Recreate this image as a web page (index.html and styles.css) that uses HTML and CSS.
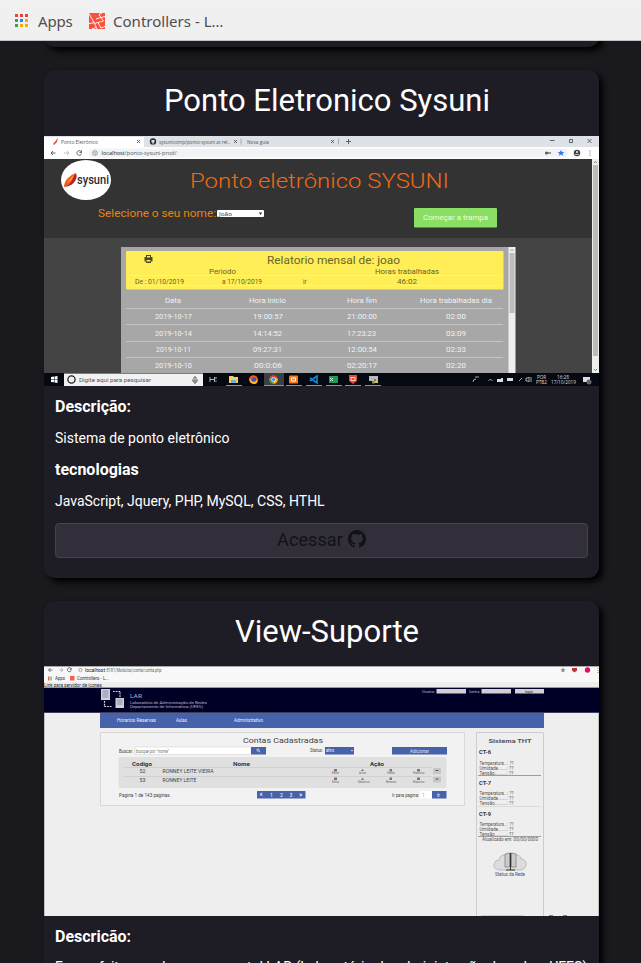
FILE: index.html
```html
<!DOCTYPE html>
<html lang="pt-BR">
<head>
<meta charset="utf-8">
<title>Portfólio</title>
<link rel="stylesheet" href="styles.css">
</head>
<body>
<header class="bookmarks">
  <svg class="apps" width="14" height="14" viewBox="0 0 14 14"><path fill="#ea4335" d="M0 0h3v3H0zM5 0h3v3H5zM10 0h3v3h-3z"/><path fill="#34a05a" d="M0 5h3v3H0zM0 10h3v3H0z"/><path fill="#1a8cf0" d="M5 5h3v3H5z"/><path fill="#f9ab00" d="M10 5h3v3h-3zM5 10h3v3H5zM10 10h3v3h-3z"/></svg>
  <span class="apps-label">Apps</span>
  <svg class="laravel" width="16" height="16" viewBox="0 0 16 16"><path fill="#fb503b" d="M0 0h16v16H0z"/><path d="M0 .5l5.500 10L14.500 8l-2.500-3.500 4-1M0 10.500l5.500-.8M5.500 10.500L8 16M9 9.500l3 5.500 4-1.500M7 6l5-1.500L10 1.500l3-1.500M3 16l4-1.500" fill="none" stroke="#fff" stroke-width=".9"/></svg>
  <span class="site-label">Controllers - L…</span>
</header>
<main class="projects">
  <article class="card card-end"></article>
  <article class="card">
    <h2 class="title">Ponto Eletronico Sysuni</h2>
    <svg class="shot" viewBox="44 136 555 250">
      <path fill="#333" d="M44 136h555v250H44z"/>
      <path fill="#dee1e6" d="M44 136h555v11H44z"/><path fill="#fff" d="M44 137h100v10H44zM44 147h555v12H44z"/>
      <rect x="89" y="148.500" width="479" height="9" rx="4.500" fill="#f1f3f4"/>
      <path fill="#e8502a" d="M53 144l5-6-1 4-3 3z"/>
      <g class="t" fill="#55585c" font-size="5.500">
        <text x="61" y="143.500" textLength="37" lengthAdjust="spacingAndGlyphs">Ponto Eletrônico</text>
        <text x="159" y="143.500" textLength="71" lengthAdjust="spacingAndGlyphs">sysunicomp/ponto-sysuni at rel..</text>
        <text x="247" y="143.500" textLength="22" lengthAdjust="spacingAndGlyphs">Nova guia</text>
        <text x="101.500" y="155" textLength="75" lengthAdjust="spacingAndGlyphs"><tspan fill="#222">localhost</tspan>/ponto-sysuni-prod/</text>
      </g>
      <circle cx="153" cy="141.500" r="3.200" fill="#24292e"/><path fill="#dee1e6" d="M151.500 140h3v2.500h-1v2h-1v-2h-1z"/>
      <path d="M137 140l3 3m0-3l-3 3M234 140l3 3m0-3l-3 3M331 140l3 3m0-3l-3 3M346 141.500h5m-2.500-2.500v5M550 140.500h4.500M569.500 139.500h3v3h-3zM587.500 139l4 4m0-4l-4 4M51 153h4.500m-2.500-2l-2 2 2 2" fill="none" stroke="#505358" stroke-width=".9"/>
      <path d="M241 138.500v6M338.500 138.500v6" stroke="#8f9296" stroke-width=".7"/>
      <path d="M64 153h5m-2-2l2 2-2 2" fill="none" stroke="#b5b7ba" stroke-width=".9"/>
      <path d="M81 151.500a2.300 2.300 0 1 0 .5 2M81.500 150.500v2h-2" fill="none" stroke="#505358" stroke-width=".9"/>
      <circle cx="95" cy="153" r="2.300" fill="none" stroke="#707377" stroke-width=".7"/><path d="M95 151.800v2.400" stroke="#707377" stroke-width=".7"/>
      <path d="M546 153h5" stroke="#55585c" stroke-width="1.200"/><circle cx="546.500" cy="153" r="1.500" fill="#55585c"/><path fill="#3478ed" d="M561 150l1 2h2.500l-2 1.500.8 2.300-2.300-1.300-2.300 1.300.8-2.300-2-1.500h2.500z"/>
      <circle cx="577" cy="153" r="3.200" fill="#444"/><circle cx="577" cy="152" r="1" fill="#eee"/><path d="M575 154.500h4" stroke="#ddd" stroke-width=".8"/><path d="M590 150.500v1M590 152.700v1M590 154.900v1" stroke="#666"/>
      <ellipse cx="86" cy="180" rx="25" ry="20" fill="#fff"/><path fill="#f05a22" d="M64 187q0-5 4-9 4-4 8-5-1 5-4 8-2 4-8 6"/><path fill="#b41f25" d="M64.500 187q7-3 9-10l2.500-4q2 5-2.500 10-3 3-9 4z"/><path fill="#f9a51a" d="M67 183q3-5 7-8-1 5-7 8"/>
      <text class="w" x="77" y="184" textLength="32" lengthAdjust="spacingAndGlyphs" font-size="12" font-weight="500" fill="#2b2b2b">sysuni</text>
      <text class="w" x="190" y="188" textLength="259" lengthAdjust="spacingAndGlyphs" font-size="19.500" font-weight="300" fill="#f06a15">Ponto eletrônico SYSUNI</text>
      <text class="w" x="98" y="217" textLength="118" lengthAdjust="spacingAndGlyphs" font-size="10" fill="#e58610">Selecione o seu nome:</text>
      <rect x="217" y="210" width="47" height="7" rx="1" fill="#fff"/><text class="t" x="219" y="216" textLength="13" lengthAdjust="spacingAndGlyphs" font-size="5.500" fill="#333">João</text><path fill="#222" d="M259 212.500h3l-1.500 2.500z"/>
      <rect x="414" y="208" width="83" height="19.500" rx="1" fill="#8ade63"/><text class="w" x="423" y="220" textLength="65" lengthAdjust="spacingAndGlyphs" font-size="6.500" fill="#eaffdf">Começar a trampa</text>
      <path fill="#444" d="M44 238h548v135H44z"/>
      <path fill="#eee" d="M592 159h7v214h-7z"/><path fill="#bbb" d="M593 165h5v191h-5z"/><path d="M594 163l1.500-1.500 1.500 1.500M594 369l1.500 1.500 1.500-1.500" fill="none" stroke="#666" stroke-width=".8"/>
      <path fill="#a7a7a7" d="M121 247h388v126H121z"/><path fill="#eee" d="M508.500 247h7v126h-7z"/><path fill="#bdbdbd" d="M509.500 253h5v60h-5z"/><path d="M510.500 251l1.500-1.500 1.500 1.500" fill="none" stroke="#777" stroke-width=".7"/>
      <rect x="126" y="251" width="377.500" height="38.500" rx="1" fill="#ffee55"/><path d="M130 275.500h370M130 285.500h370" stroke="#fff38c" stroke-width=".8"/>
      <path fill="#4b4828" d="M146 255h5v2h1.500v4.500h-1.500v1.500h-5v-1.500h-1.500V257h1.500z"/><path fill="#ffee55" d="M147 256h3v1.500h-3zM146.500 260h4v1.500h-4z"/>
      <g class="w" fill="#69642c">
        <text x="267" y="264" textLength="133" lengthAdjust="spacingAndGlyphs" font-size="10.300">Relatorio mensal de: joao</text>
        <g font-size="6.500"><text x="209" y="273.500" textLength="27" lengthAdjust="spacingAndGlyphs">Periodo</text><text x="375" y="273.500" textLength="64" lengthAdjust="spacingAndGlyphs">Horas trabalhadas</text><text x="135" y="283.500" textLength="49" lengthAdjust="spacingAndGlyphs">De : 01/10/2019</text><text x="222" y="283.500" textLength="40" lengthAdjust="spacingAndGlyphs">a 17/10/2019</text><text x="303" y="283.500">ir</text><text x="397" y="283.500" textLength="20" lengthAdjust="spacingAndGlyphs">46:02</text></g>
      </g>
      <path d="M126 308.500h377M126 324.500h377M126 341.500h377M126 357.500h377" stroke="#c4c4c4"/>
      <g class="w" fill="#f2f2f2" font-size="6.800">
        <text x="165" y="303" textLength="16" lengthAdjust="spacingAndGlyphs">Data</text><text x="249" y="303" textLength="37" lengthAdjust="spacingAndGlyphs">Hora inicio</text><text x="347" y="303" textLength="30" lengthAdjust="spacingAndGlyphs">Hora fim</text><text x="420" y="303" textLength="72" lengthAdjust="spacingAndGlyphs">Hora trabalhadas dia</text>
        <text x="155" y="319" textLength="37" lengthAdjust="spacingAndGlyphs">2019-10-17</text><text x="253" y="319" textLength="30" lengthAdjust="spacingAndGlyphs">19:00:57</text><text x="347" y="319" textLength="30" lengthAdjust="spacingAndGlyphs">21:00:00</text><text x="446" y="319" textLength="20" lengthAdjust="spacingAndGlyphs">02:00</text>
        <text x="155" y="335.500" textLength="37" lengthAdjust="spacingAndGlyphs">2019-10-14</text><text x="253" y="335.500" textLength="29" lengthAdjust="spacingAndGlyphs">14:14:52</text><text x="347" y="335.500" textLength="29" lengthAdjust="spacingAndGlyphs">17:23:23</text><text x="446" y="335.500" textLength="20" lengthAdjust="spacingAndGlyphs">03:09</text>
        <text x="156" y="351.500" textLength="35" lengthAdjust="spacingAndGlyphs">2019-10-11</text><text x="253" y="351.500" textLength="29" lengthAdjust="spacingAndGlyphs">09:27:31</text><text x="347" y="351.500" textLength="30" lengthAdjust="spacingAndGlyphs">12:00:54</text><text x="446" y="351.500" textLength="20" lengthAdjust="spacingAndGlyphs">02:33</text>
        <text x="155" y="368" textLength="37" lengthAdjust="spacingAndGlyphs">2019-10-10</text><text x="254" y="368" textLength="28" lengthAdjust="spacingAndGlyphs">00:0:06</text><text x="347" y="368" textLength="30" lengthAdjust="spacingAndGlyphs">02:20:17</text><text x="446" y="368" textLength="20" lengthAdjust="spacingAndGlyphs">02:20</text>
      </g>
      <path fill="#050912" d="M44 373h555v13H44z"/><path fill="#f1f1f1" d="M64 373.500h139V386H64z"/><path fill="#fff" d="M51 377l3-.4v2.600h-3zM54.500 376.500l3-.5v3.200h-3zM51 379.700h3v2.600l-3-.4zM54.500 379.700h3v3.200l-3-.5z"/>
      <circle cx="71.500" cy="379.500" r="3.600" fill="none" stroke="#222" stroke-width="1.300"/><text class="w" x="79" y="382" textLength="72" lengthAdjust="spacingAndGlyphs" font-size="6" fill="#555">Digite aqui para pesquisar</text>
      <path d="M194 377h2v4h-2zM192.500 379.500q0 3 2.500 3t2.500-3M195 382.500v1.500" fill="none" stroke="#444" stroke-width=".8"/><path d="M210 377v5M214.500 377v5M210 379.500h4.500M216 377v2M216 380.500v1.500" fill="none" stroke="#ddd" stroke-width=".8"/>
      <path fill="#3b4045" d="M264 373h20v12h-20z"/><path d="M226 385.500h16M264 385.500h20M286 385.500h16M306 385.500h16M326 385.500h16M345 385.500h16M365 385.500h16" stroke="#b576cd"/>
      <path fill="#f3cf64" d="M229 376h4l1 1h4v6h-9z"/><path fill="#5fb5e7" d="M231 380h5v3h-5z"/>
      <circle cx="253.500" cy="379.500" r="4.300" fill="#f35b22"/><circle cx="254" cy="379.500" r="2.200" fill="#4f4bb5"/><path fill="#ffc629" d="M250 377q0 5 4 5 4-1 3-5 2 7-3 7-6-1-4-7"/>
      <circle cx="273.500" cy="379.500" r="4.300" fill="#ea4335"/><path fill="#34a853" d="M269.700 377.500l3.800 6.300a4.300 4.300 0 0 1-3.800-6.300"/><path fill="#fbbc05" d="M273.500 379.500l4-1.500q1 5-4 6z"/><circle cx="273.500" cy="379.500" r="2" fill="#4285f4" stroke="#fff" stroke-width=".7"/>
      <rect x="289" y="375.500" width="9" height="8" rx="1" fill="#f47a20"/><path d="M291.500 378h4v3h-4z" fill="none" stroke="#fff"/><path d="M310 378l7 5v-7l-7 5" fill="none" stroke="#1688d5" stroke-width="1.600"/>
      <path fill="#1a9b58" d="M329 376h9v7h-9z"/><path d="M330 378l3 3m0-3l-3 3" stroke="#fff" stroke-width=".8"/><path fill="#e74732" d="M349 375h8v6l-4 3-4-3z"/><path d="M351 377.500h4v3h-4z" fill="none" stroke="#ffd8cc"/>
      <path fill="#b9b9b9" d="M369 376h9v5h-9z"/><path fill="#e94a38" d="M374 379h2v2h-2z"/><path fill="#4fb75b" d="M372 381h3v2.500h-3z"/><path fill="#f0c23b" d="M375 381h3v2h-3z"/>
      <path d="M473 382q0-3 3-3m-1-2h4M488.500 381l2-2 2 2M519 381l3-3M526 378v3h2l1 1v-5l-1 1zM531 377v5" fill="none" stroke="#ccc" stroke-width=".8"/><path fill="#ddd" d="M497 379h4v-1h2v4h-6zM507 378h6v3h-6zM583 377h7v5h-7z"/><circle cx="589" cy="382" r="2.500" fill="#666"/>
      <g class="t" fill="#ddd" font-size="5"><text x="537" y="378.500" textLength="9" lengthAdjust="spacingAndGlyphs">POR</text><text x="536" y="384" textLength="11" lengthAdjust="spacingAndGlyphs">PTB2</text><text x="557" y="378.500" textLength="12" lengthAdjust="spacingAndGlyphs">16:28</text><text x="551" y="384" textLength="25" lengthAdjust="spacingAndGlyphs">17/10/2019</text></g>
    </svg>
    <div class="details">
      <h3>Descrição:</h3>
      <p>Sistema de ponto eletrônico</p>
      <h3>tecnologias</h3>
      <p>JavaScript, Jquery, PHP, MySQL, CSS, HTHL</p>
      <a class="button">Acessar <svg class="github" viewBox="0 0 16 16"><path d="M8 0C3.580 0 0 3.580 0 8c0 3.540 2.290 6.530 5.470 7.590.4.070.55-.17.55-.38 0-.19-.01-.82-.01-1.490-2.010.37-2.530-.49-2.690-.94-.09-.23-.48-.94-.82-1.130-.28-.15-.68-.52-.01-.53.63-.01 1.080.58 1.230.82.72 1.210 1.870.87 2.330.66.07-.52.28-.87.51-1.070-1.780-.2-3.640-.89-3.640-3.950 0-.87.31-1.590.82-2.150-.08-.2-.36-1.020.08-2.120 0 0 .67-.21 2.200.82.64-.18 1.320-.27 2-.27s1.360.09 2 .27c1.530-1.040 2.200-.82 2.200-.82.44 1.100.16 1.920.08 2.120.51.56.82 1.270.82 2.150 0 3.070-1.870 3.750-3.650 3.950.29.25.54.73.54 1.480 0 1.070-.01 1.930-.01 2.200 0 .21.15.46.55.38A8.010 8.010 0 0 0 16 8c0-4.420-3.580-8-8-8z"/></svg></a>
    </div>
  </article>
  <article class="card">
    <h2 class="title">View-Suporte</h2>
    <svg class="shot" viewBox="44 666 555 250">
      <path fill="#eee" d="M44 666h555v250H44z"/><path fill="#f8f8f8" d="M44 666h555v16H44z"/>
      <path d="M44 666.500h555" stroke="#aaa"/>
      <g class="w" fill="#666" font-size="4.800"><text x="85" y="671.500" textLength="20" lengthAdjust="spacingAndGlyphs" fill="#111">localhost</text><text x="105.500" y="671.500" textLength="56" lengthAdjust="spacingAndGlyphs">:8181/Modulos/conta/conta.php</text><text x="55" y="680" textLength="10" lengthAdjust="spacingAndGlyphs" fill="#333">Apps</text><text x="77" y="680" textLength="32" lengthAdjust="spacingAndGlyphs" fill="#333">Controllers - L...</text><text x="44" y="686.700" textLength="58" lengthAdjust="spacingAndGlyphs" fill="#222" font-size="5">Link para servidor de ícones</text></g>
      <path d="M48.500 670h4m-2-2l-2 2 2 2M71 668.500a2 2 0 1 0 .3 2M71.300 668v1.500h-1.500" fill="none" stroke="#555" stroke-width=".8"/><path d="M59 670h4m-2-2l2 2-2 2" fill="none" stroke="#aaa" stroke-width=".8"/><circle cx="80.500" cy="670" r="1.700" fill="none" stroke="#777" stroke-width=".6"/>
      <path fill="#f06050" d="M48 676.500h1v4h-1zM70 676h4.500v4.500H70z"/><path fill="#45a76b" d="M49.500 676.500h1v4h-1z"/><path fill="#e4ac34" d="M51 676.500h1v4h-1z"/>
      <path fill="#888" d="M563 667.500l.8 1.700 1.700.2-1.300 1.100.4 1.700-1.600-.8-1.600.8.4-1.700-1.300-1.100 1.700-.2z"/><path fill="#b4373d" d="M572 668h5v2.500l-2.500 2-2.500-2z"/><circle cx="587.500" cy="670" r="2.700" fill="#d9145e"/><path d="M598 668v1M598 670v1M598 672v1" stroke="#777"/>
      <path fill="#000026" d="M44 688h555v24.500H44z"/><path d="M44 687.500h555" stroke="#999"/><path d="M44 712.500h555" stroke="#3c3c5c"/>
      <path fill="#cfd0db" d="M101 689h9v11h-9zM115.500 698h8.500v10h-8.500z"/><path d="M102.500 691h6M102.500 693h6M102.500 695h6M102.500 697h6M117 700h5.500M117 702h5.500M117 704h5.500" stroke="#777c91" stroke-width=".8"/><path d="M113 691.500h7v6M104.500 701v5.500h8" fill="none" stroke="#ddd" stroke-width="1.200" stroke-dasharray="1.700 1"/>
      <g class="w" fill="#b7b7cd"><text x="130" y="698" textLength="12" lengthAdjust="spacingAndGlyphs" font-size="6">LAR</text><g font-size="4.300"><text x="130" y="703.500" textLength="77" lengthAdjust="spacingAndGlyphs">Laboratório de Administração de Redes</text><text x="130" y="708" textLength="73" lengthAdjust="spacingAndGlyphs">Departamento de Informática (UFES)</text><text x="422" y="692.500" textLength="13" lengthAdjust="spacingAndGlyphs">Usuário:</text><text x="469" y="692.500" textLength="11" lengthAdjust="spacingAndGlyphs">Senha:</text></g></g>
      <path fill="#d2cfd5" d="M436.500 689H466v4.500h-29.500zM481.500 689H511v4.500h-29.500zM515 689h29v4.500h-29z"/><text class="w" x="525" y="692.500" textLength="8" lengthAdjust="spacingAndGlyphs" font-size="4" fill="#222">login</text>
      <path fill="#4562aa" d="M100 713h444v15H100z"/><g class="w" fill="#edf1ff" font-size="4.800"><text x="117" y="722" textLength="39" lengthAdjust="spacingAndGlyphs">Horarios Reservas</text><text x="176" y="722" textLength="11" lengthAdjust="spacingAndGlyphs">Aulas</text><text x="234" y="722" textLength="29" lengthAdjust="spacingAndGlyphs">Administrativo</text></g>
      <path d="M44.500 713v203M598.500 713v203" stroke="#aaa" stroke-width=".7"/>
      <path fill="#f2f2f2" stroke="#d8d8d8" d="M100.500 732.500h364v73h-364z"/><path fill="none" stroke="#ccc" d="M476.500 916V732.500h67V916"/>
      <text class="w" x="243" y="742.500" textLength="80" lengthAdjust="spacingAndGlyphs" font-size="7.300" fill="#444">Contas Cadastradas</text>
      <path fill="#fff" stroke="#ccc" stroke-width=".5" d="M135 747h116v7.500H135z"/><path fill="#4562aa" d="M251 747h15v7.500h-15zM325 747h29v7.500h-29zM392 747h55v7.500h-55z"/><circle cx="258" cy="750" r="1.200" fill="none" stroke="#fff" stroke-width=".6"/><path d="M259 751l1.300 1.300" stroke="#fff" stroke-width=".6"/>
      <rect x="118.500" y="757" width="328" height="31" rx="2" fill="#e0e0e0"/><path d="M123 767.500h309M123 776.500h309" stroke="#c9c9c9" stroke-width=".7"/>
      <g class="w" fill="#444" font-size="4.600"><text x="119" y="752.500" textLength="14" lengthAdjust="spacingAndGlyphs">Buscar:</text><text x="136" y="752.500" textLength="33" lengthAdjust="spacingAndGlyphs" fill="#777">busque por "nome"</text><text x="310" y="752" textLength="13" lengthAdjust="spacingAndGlyphs">Status:</text><text x="326" y="752" textLength="8" lengthAdjust="spacingAndGlyphs" fill="#fff">ativo</text><text x="410" y="752.500" textLength="19" lengthAdjust="spacingAndGlyphs" fill="#e1e7ff">Adicionar</text>
      <g font-weight="700" font-size="5.300" fill="#333"><text x="132" y="766" textLength="20" lengthAdjust="spacingAndGlyphs">Codigo</text><text x="233" y="766" textLength="17" lengthAdjust="spacingAndGlyphs">Nome</text><text x="370" y="766" textLength="14" lengthAdjust="spacingAndGlyphs">Ação</text></g>
      <text x="139.500" y="773" textLength="6" lengthAdjust="spacingAndGlyphs">52</text><text x="162.500" y="773" textLength="51" lengthAdjust="spacingAndGlyphs">RONNEY LEITE VIEIRA</text><text x="139.500" y="781.500" textLength="6" lengthAdjust="spacingAndGlyphs">53</text><text x="162.500" y="781.500" textLength="34" lengthAdjust="spacingAndGlyphs">RONNEY LEITE</text><text x="119" y="796.500" textLength="52" lengthAdjust="spacingAndGlyphs">Pagina 1 de 143 paginas.</text><text x="392" y="796.500" textLength="27" lengthAdjust="spacingAndGlyphs">Ir para pagina:</text></g>
      <path fill="#fff" d="M351 750h2l-1 1.500z"/>
      <g fill="#777"><path d="M334 769h3v2.500h-3zM361 771l1.500-2 1.500 2zM389.500 769h2.500v2.500h-2.500zM417 769h3v2.500h-3zM334 777.500h3v2.500h-3zM361 780l1.500-2.500 1.500 2.500zM389.500 777.500h2.500v2.500h-2.500zM417 777.500h3v2.500h-3z"/></g>
      <g class="w" fill="#735d5d" font-size="2.800"><text x="332" y="774">Editar</text><text x="359" y="774">Ativar</text><text x="387" y="774">Senha</text><text x="413" y="774">Historico</text><text x="332" y="782.500">Editar</text><text x="358" y="782.500">Desativar</text><text x="386" y="782.500">Renovar</text><text x="413" y="782.500">Historico</text></g>
      <path fill="#c7c7c7" d="M433 768h8v6h-8zM433 776.500h8v6h-8z"/><path d="M435.500 770.500h3M435.500 779h3" stroke="#555"/>
      <path fill="#4562aa" d="M257 791h48.500v7.500H257zM432 791h14.500v7.500H432z"/><path fill="#fff" d="M420 791h12v7.500h-12z"/><g class="w" fill="#fff" font-size="5"><text x="259.500" y="797" font-size="7">«</text><text x="270" y="796.500">1</text><text x="280" y="796.500">2</text><text x="289.500" y="796.500">3</text><text x="299" y="797" font-size="7">»</text><text x="437" y="796.500">Ir</text><text x="422" y="796.500" fill="#aaa">1</text></g>
      <text class="w" x="488.500" y="743" textLength="43" lengthAdjust="spacingAndGlyphs" font-size="6" font-weight="700" fill="#555">Sistema THT</text>
      <g class="w" font-size="4.600" fill="#555"><g font-weight="700" fill="#333"><text x="479" y="754" textLength="12" lengthAdjust="spacingAndGlyphs">CT-6</text><text x="479" y="784.500" textLength="12" lengthAdjust="spacingAndGlyphs">CT-7</text><text x="479" y="815.500" textLength="12" lengthAdjust="spacingAndGlyphs">CT-9</text></g>
      <text x="479.500" y="764.500" textLength="34" lengthAdjust="spacingAndGlyphs">Temperatura...: ??</text><text x="479.500" y="769.500" textLength="34" lengthAdjust="spacingAndGlyphs">Umidade.......: ??</text><text x="479.500" y="774.500" textLength="34" lengthAdjust="spacingAndGlyphs">Tensão..........: ??</text>
      <text x="479.500" y="795" textLength="34" lengthAdjust="spacingAndGlyphs">Temperatura...: ??</text><text x="479.500" y="800" textLength="34" lengthAdjust="spacingAndGlyphs">Umidade.......: ??</text><text x="479.500" y="805" textLength="34" lengthAdjust="spacingAndGlyphs">Tensão..........: ??</text>
      <text x="479.500" y="825.500" textLength="34" lengthAdjust="spacingAndGlyphs">Temperatura...: ??</text><text x="479.500" y="830.500" textLength="34" lengthAdjust="spacingAndGlyphs">Umidade.......: ??</text><text x="479.500" y="835.500" textLength="34" lengthAdjust="spacingAndGlyphs">Tensão..........: ??</text><text x="482" y="840.500" textLength="56" lengthAdjust="spacingAndGlyphs">Atualizado em: 00/00/0000</text><text x="495" y="876" textLength="30" lengthAdjust="spacingAndGlyphs" fill="#35507c">Status da Rede</text></g>
      <path d="M478 775.500h63M478 836.500h63" stroke="#888" stroke-width=".8"/><path d="M478 806.500h63" stroke="#d6d6d6" stroke-width=".8"/>
      <path d="M499 870q-6-1-5-6 1-4 5-4 1-6 7-5 4-4 9 0 5-1 6 4 6 1 5 6-1 5-6 5z" fill="#dcdcdc" stroke="#aaa" stroke-width=".7"/><path fill="#ccc" stroke="#666" stroke-width=".6" d="M505 854l4.500-1v14H505zM511.500 853l4.500 1v13h-4.500z"/><path d="M510.500 853v17M506 870h9" stroke="#333"/>
      <path d="M481 915.500h43" stroke="#ccc"/><path d="M549 915.500h4M563 915.500h4" stroke="#78848c"/>
    </svg>
    <div class="details details-tight">
      <h3>Descricão:</h3>
      <p>Foram feitas mudanças no portal LAR (Laboratório de administração de redes- UFES)</p>
    </div>
  </article>
</main>
</body>
</html>
```
FILE: styles.css
```css
* { box-sizing: border-box; }
body { margin: 0; height: 963px; overflow: hidden; background: #1a191e; color: #fff; font-family: Roboto, sans-serif; }
.bookmarks { height: 41px; display: flex; align-items: center; padding: 2px 0 0 15px; background: linear-gradient(#f0f1f3, #f0f0f0 6px); border-bottom: 1px solid #c4c4c4; color: #4e4e4e; font: 15px/20px "Noto Sans", sans-serif; white-space: nowrap; position: relative; z-index: 1; }
.apps-label { margin-left: 9px; width: 35px; letter-spacing: -.2px; }
.laravel { margin-left: 16px; }
.site-label { margin-left: 8px; letter-spacing: .02px; }
.projects { display: flex; flex-direction: column; gap: 23px; height: 922px; overflow: hidden; padding: 0 42px 0 44px; }
.card { flex: none; height: 507.6px; border-radius: 11px; background: #1e1c24; box-shadow: 4px 4px 6px #000; }
.card-end { height: 20px; margin-top: -14px; }
.title { margin: 0; height: 65.6px; padding: 0 0 5px 11px; font-size: 31px; font-weight: 400; line-height: 61px; text-align: center; }
.shot { display: block; width: 555px; height: 250px; }
.details { padding: 5.2px 11px 0; }
.details h3, .details p { margin: 0; height: 31.5px; line-height: 32px; white-space: nowrap; }
.details h3 { font-size: 16px; font-weight: 700; }
.details p { font-size: 14px; font-weight: 400; }
.details-tight p { margin-top: -1.5px; font-size: 14.1px; }
.button { display: flex; align-items: center; justify-content: center; gap: 5px; height: 35px; margin-top: 6px; border: 1px solid #444349; border-radius: 4px; background: #322f3b; color: #121214; font-size: 18.2px; padding-bottom: 2px; }
.github { width: 18px; height: 18px; fill: currentColor; }
.t { font-family: "Open Sans", sans-serif; }
.w { font-family: Roboto, sans-serif; }
```
